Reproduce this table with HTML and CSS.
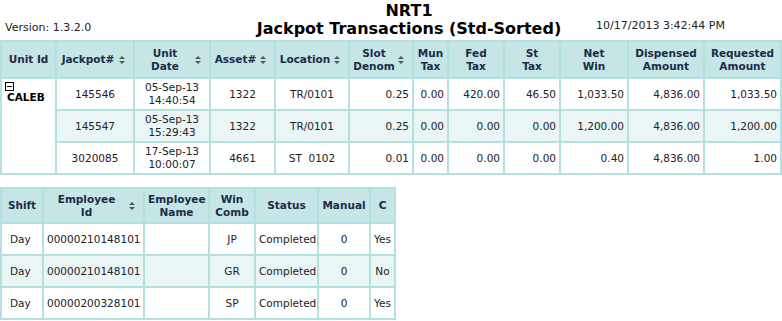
FILE: index.html
```html
<!DOCTYPE html>
<html lang="en">
<head>
<meta charset="utf-8">
<title>NRT1 - Jackpot Transactions</title>
<link rel="stylesheet" href="styles.css">
</head>
<body>
<header class="report-head">
  <div class="version">Version: 1.3.2.0</div>
  <div class="titles">
    <div class="site">NRT1</div>
    <h1 class="report-title">Jackpot Transactions (Std-Sorted)</h1>
  </div>
  <div class="stamp">10/17/2013 3:42:44 PM</div>
</header>

<table class="grid grid-main">
  <colgroup>
    <col class="c-unit"><col class="c-jp"><col class="c-date"><col class="c-asset"><col class="c-loc"><col class="c-denom">
    <col class="c-mun"><col class="c-fed"><col class="c-st"><col class="c-net"><col class="c-disp"><col class="c-req">
  </colgroup>
  <thead>
    <tr>
      <th>Unit Id</th>
      <th><div class="sortable"><span class="lbl">Jackpot#</span><span class="sort"></span></div></th>
      <th><div class="sortable"><span class="lbl">Unit<br>Date</span><span class="sort"></span></div></th>
      <th><div class="sortable"><span class="lbl">Asset#</span><span class="sort"></span></div></th>
      <th><div class="sortable"><span class="lbl">Location</span><span class="sort"></span></div></th>
      <th><div class="sortable"><span class="lbl">Slot<br>Denom</span><span class="sort"></span></div></th>
      <th>Mun<br>Tax</th>
      <th>Fed<br>Tax</th>
      <th>St<br>Tax</th>
      <th>Net<br>Win</th>
      <th>Dispensed<br>Amount</th>
      <th>Requested<br>Amount</th>
    </tr>
  </thead>
  <tbody>
    <tr>
      <td class="unit" rowspan="3">
        <svg class="toggle" width="9" height="9" viewBox="0 0 9 9" aria-hidden="true"><rect x="0.5" y="0.5" width="8" height="8" fill="#fff" stroke="#000"/><path d="M2 4.5h5" stroke="#000"/></svg>
        <div class="unit-name">CALEB</div>
      </td>
      <td class="ctr">145546</td>
      <td class="ctr">05-Sep-13<br>14:40:54</td>
      <td class="ctr">1322</td>
      <td class="ctr">TR/0101</td>
      <td class="num">0.25</td>
      <td class="num">0.00</td>
      <td class="num">420.00</td>
      <td class="num">46.50</td>
      <td class="num">1,033.50</td>
      <td class="num">4,836.00</td>
      <td class="num">1,033.50</td>
    </tr>
    <tr class="alt">
      <td class="ctr">145547</td>
      <td class="ctr">05-Sep-13<br>15:29:43</td>
      <td class="ctr">1322</td>
      <td class="ctr">TR/0101</td>
      <td class="num">0.25</td>
      <td class="num">0.00</td>
      <td class="num">0.00</td>
      <td class="num">0.00</td>
      <td class="num">1,200.00</td>
      <td class="num">4,836.00</td>
      <td class="num">1,200.00</td>
    </tr>
    <tr>
      <td class="ctr">3020085</td>
      <td class="ctr">17-Sep-13<br>10:00:07</td>
      <td class="ctr">4661</td>
      <td class="ctr">ST&nbsp;&nbsp;0102</td>
      <td class="num">0.01</td>
      <td class="num">0.00</td>
      <td class="num">0.00</td>
      <td class="num">0.00</td>
      <td class="num">0.40</td>
      <td class="num">4,836.00</td>
      <td class="num">1.00</td>
    </tr>
  </tbody>
</table>

<table class="grid grid-detail">
  <colgroup>
    <col class="d-shift"><col class="d-emp"><col class="d-name"><col class="d-win"><col class="d-status"><col class="d-manual"><col class="d-c">
  </colgroup>
  <thead>
    <tr>
      <th>Shift</th>
      <th><div class="sortable"><span class="lbl">Employee<br>Id</span><span class="sort"></span></div></th>
      <th>Employee<br>Name</th>
      <th>Win<br>Comb</th>
      <th>Status</th>
      <th>Manual</th>
      <th>C</th>
    </tr>
  </thead>
  <tbody>
    <tr>
      <td class="lft">Day</td>
      <td class="ctr">00000210148101</td>
      <td></td>
      <td class="ctr">JP</td>
      <td class="lft-s">Completed</td>
      <td class="ctr">0</td>
      <td class="ctr">Yes</td>
    </tr>
    <tr class="alt">
      <td class="lft">Day</td>
      <td class="ctr">00000210148101</td>
      <td></td>
      <td class="ctr">GR</td>
      <td class="lft-s">Completed</td>
      <td class="ctr">0</td>
      <td class="ctr">No</td>
    </tr>
    <tr>
      <td class="lft">Day</td>
      <td class="ctr">00000200328101</td>
      <td></td>
      <td class="ctr">SP</td>
      <td class="lft-s">Completed</td>
      <td class="ctr">0</td>
      <td class="ctr">Yes</td>
    </tr>
  </tbody>
</table>
</body>
</html>
```

FILE: styles.css
```css
html, body {
  margin: 0;
  padding: 0;
  background: #fff;
}

body {
  font-family: "DejaVu Sans", Verdana, sans-serif;
  font-size: 10.5px;
  color: #222;
  width: 782px;
}

/* ---- report header ---- */
.report-head {
  display: grid;
  grid-template-columns: 250px 318px 1fr;
  align-items: end;
  height: 40px;
  overflow: hidden;
}

.version {
  padding-left: 5px;
  font-size: 11px;
  line-height: 13px;
  color: #222;
  padding-bottom: 6px;
}

.titles {
  text-align: center;
  color: #000;
  white-space: nowrap;
  padding-bottom: 2px;
}

.site {
  font-weight: bold;
  font-size: 16px;
  line-height: 18px;
}

.report-title {
  margin: 0;
  font-size: 16px;
  line-height: 18px;
  font-weight: bold;
}

.stamp {
  padding-left: 28px;
  font-size: 11px;
  line-height: 13px;
  padding-bottom: 8px;
  white-space: nowrap;
}

/* ---- data grids ---- */
.grid {
  border-collapse: collapse;
  table-layout: fixed;
  border: 2px solid #a9dddd;
}

.grid th,
.grid td {
  border: 2px solid #b2e1e1;
  line-height: 13px;
  padding: 0 3px;
  overflow: hidden;
  white-space: nowrap;
}

.grid th {
  background: #c6e5e5;
  color: #1b2b4b;
  font-weight: bold;
  text-align: center;
  height: 35px;
}

.grid td {
  height: 30px;
}

.grid tr.alt td {
  background: #eaf6f6;
}

.grid td.ctr { text-align: center; }
.grid td.num { text-align: right; padding-right: 3px; }
.grid td.lft { text-align: left; padding-left: 8px; }
.grid td.lft-s { text-align: left; padding-left: 3px; }

.grid td.unit {
  vertical-align: top;
  padding: 3px 0 0 3px;
  background: #fff;
}

.toggle {
  display: block;
}

.unit-name {
  font-weight: bold;
  color: #000;
  padding-left: 2px;
  line-height: 12px;
}

/* header label with sort arrows on the right */
.sortable {
  display: flex;
  align-items: center;
}

.sortable .lbl {
  flex: 1;
  text-align: center;
}

.sort {
  display: flex;
  flex-direction: column;
  align-items: center;
  gap: 2px;
  width: 7px;
  margin-left: 2px;
  margin-right: 5px;
}

.sort::before,
.sort::after {
  content: "";
  width: 0;
  height: 0;
  border-left: 3px solid transparent;
  border-right: 3px solid transparent;
}

.sort::before { border-bottom: 3px solid #555; }
.sort::after { border-top: 3px solid #555; }

/* column widths */
.grid-main { width: 781px; }
.c-unit { width: 55px; }
.c-jp { width: 78px; }
.c-date { width: 76px; }
.c-asset { width: 65px; }
.c-loc { width: 74px; }
.c-denom { width: 64px; }
.c-mun { width: 35px; }
.c-fed { width: 56px; }
.c-st { width: 56px; }
.c-net { width: 68px; }
.c-disp { width: 76px; }
.c-req { width: 77px; }

.grid-detail {
  width: 395px;
  margin-top: 12px;
}
.grid-detail th { height: 33px; }
.d-shift { width: 42px; }
.d-emp { width: 101px; }
.d-name { width: 65px; }
.d-win { width: 46px; }
.d-status { width: 63px; }
.d-manual { width: 52px; }
.d-c { width: 25px; }
```
